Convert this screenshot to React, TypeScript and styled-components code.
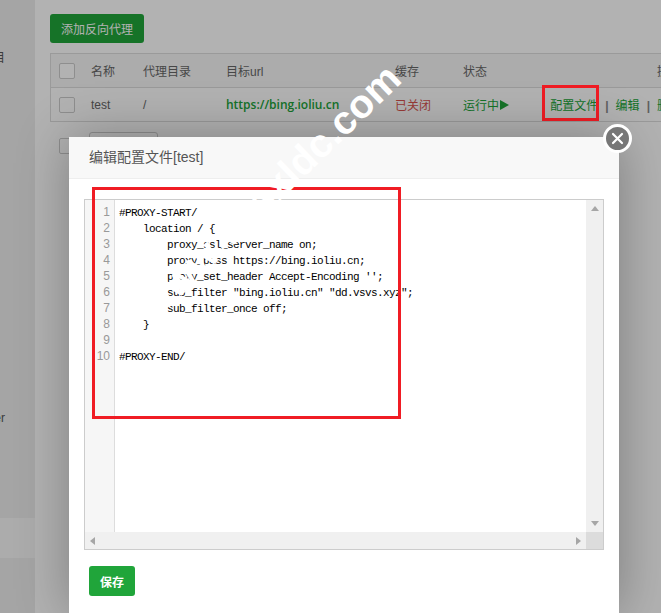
import React from "react";
import styled, { createGlobalStyle } from "styled-components";

const GlobalStyle = createGlobalStyle`
    html, body {
        margin: 0;
        height: 100%;
        overflow: hidden;
        background: #fff;
    }
    body {
        font-family: "Liberation Sans", "Noto Sans CJK SC", sans-serif;
        font-size: 12px;
        color: #666;
    }
`;

const Page = styled.div`
    display: flex;
    width: 661px;
    height: 613px;
    overflow: hidden;
`;

const Sidebar = styled.nav`
    flex: 0 0 35px;
    width: 35px;
    padding-top: 38px;
    background: #ececec;
    overflow: hidden;
`;

const SideItem = styled.div<{ $active?: boolean }>`
    width: 65px;
    height: 40px;
    margin-left: -60px;
    line-height: 40px;
    text-align: right;
    white-space: nowrap;
    color: #555;
    background: ${(p) => (p.$active ? "#f6f6f6" : "transparent")};
    box-shadow: ${(p) => (p.$active ? "40px 0 0 #f6f6f6" : "none")};
`;

const Main = styled.main`
    flex: 1;
    min-width: 0;
    padding: 14px 0 0 15px;
    background: #fff;
`;

const AddButton = styled.button`
    display: block;
    width: 94px;
    height: 29px;
    padding: 0;
    border: none;
    border-radius: 3px;
    background: #20a53a;
    color: #fff;
    font: inherit;
`;

const Table = styled.div`
    width: 680px;
    margin-top: 10px;
    border: 1px solid #ddd;
    box-sizing: border-box;
`;

const TableRow = styled.div<{ $head?: boolean }>`
    display: grid;
    grid-template-columns: 40px 52px 83px 169px 68px 87px 131px;
    align-items: center;
    height: 33px;
    background: ${(p) => (p.$head ? "#f6f6f6" : "#fff")};
    border-bottom: ${(p) => (p.$head ? "1px solid #ddd" : "none")};
    white-space: nowrap;
`;

const Check = styled.span`
    display: block;
    width: 14px;
    height: 14px;
    margin-left: 8px;
    border: 1px solid #ccc;
    border-radius: 2px;
    background: #fff;
`;

const UrlLink = styled.span`
    color: #20a53a;
    font-family: "Open Sans", "Liberation Sans", sans-serif;
    font-size: 12px;
    font-weight: 600;
`;

const Stopped = styled.span`
    color: #d9534f;
`;

const Running = styled.span`
    color: #20a53a;
`;

const PlayIcon = styled.span`
    display: inline-block;
    margin-left: 1px;
    border-style: solid;
    border-width: 5px 0 5px 9px;
    border-color: transparent transparent transparent #20a53a;
`;

const Actions = styled.div<{ $head?: boolean }>`
    text-align: right;
    color: ${(p) => (p.$head ? "#666" : "#20a53a")};
`;

const Sep = styled.span`
    margin: 0 7px;
    font-weight: 700;
    color: #888;
`;

const Pager = styled.div`
    display: flex;
    align-items: flex-start;
    gap: 14px;
    margin: 10px 0 0 9px;
`;

const PagerCheck = styled(Check)`
    margin: 6px 0 0;
`;

const PagerSelect = styled.div`
    width: 67px;
    height: 30px;
    border: 1px solid #ccc;
    border-radius: 3px;
    background: #fff;
`;

const Overlay = styled.div`
    position: absolute;
    inset: 0;
    background: rgba(0, 0, 0, 0.3);
`;

const Modal = styled.section`
    position: absolute;
    left: 69px;
    top: 137px;
    bottom: 0;
    width: 550px;
    background: #fff;
    box-shadow: 1px 1px 50px rgba(0, 0, 0, 0.3);
`;

const ModalTitle = styled.header`
    height: 41px;
    padding-left: 20px;
    line-height: 40px;
    font-size: 14px;
    color: #555;
    background: #f8f8f8;
    border-bottom: 1px solid #eee;
`;

const ModalBody = styled.div`
    padding: 20px 15px 0;
`;

const Editor = styled.div`
    display: grid;
    grid-template-columns: 1fr 17px;
    grid-template-rows: 1fr 17px;
    height: 351px;
    border: 1px solid #ccc;
    box-sizing: border-box;
`;

const EditorPane = styled.div`
    display: flex;
    min-width: 0;
    min-height: 0;
`;

const Gutter = styled.div`
    flex: 0 0 25px;
    width: 25px;
    padding: 4px 4px 0 0;
    background: #f6f6f6;
    border-right: 1px solid #ddd;
    text-align: right;
    font-size: 12px;
    line-height: 16px;
    color: #999;
`;

const Code = styled.pre`
    margin: 0;
    padding: 5px 0 0 4px;
    font-family: "Liberation Mono", "Noto Sans CJK SC", monospace;
    font-size: 11px;
    letter-spacing: -0.6px;
    line-height: 16px;
    color: #000;
`;

const Scrollbar = styled.div<{ $horizontal?: boolean }>`
    display: flex;
    flex-direction: ${(p) => (p.$horizontal ? "row" : "column")};
    align-items: center;
    justify-content: space-between;
    padding: ${(p) => (p.$horizontal ? "0 5px" : "6px 0")};
    background: #f0f0f0;
`;

const ScrollCorner = styled.div`
    background: #dcdcdc;
`;

const arrowBorders = {
    up: "0 4px 5px 4px",
    down: "5px 4px 0 4px",
    left: "4px 5px 4px 0",
    right: "4px 0 4px 5px",
};

const arrowColors = {
    up: "transparent transparent #a6a6a6 transparent",
    down: "#a6a6a6 transparent transparent transparent",
    left: "transparent #a6a6a6 transparent transparent",
    right: "transparent transparent transparent #a6a6a6",
};

const Arrow = styled.span<{ $dir: "up" | "down" | "left" | "right" }>`
    display: block;
    width: 0;
    height: 0;
    border-style: solid;
    border-width: ${(p) => arrowBorders[p.$dir]};
    border-color: ${(p) => arrowColors[p.$dir]};
`;

const SaveButton = styled.button`
    display: block;
    width: 46px;
    height: 30px;
    margin: 16px 0 0 5px;
    padding: 0;
    border: none;
    border-radius: 3px;
    background: #20a53a;
    color: #fff;
    font: inherit;
    font-weight: 700;
`;

const CloseButton = styled.button`
    position: absolute;
    left: 603px;
    top: 124px;
    display: flex;
    align-items: center;
    justify-content: center;
    width: 29px;
    height: 29px;
    padding: 0;
    border: 3px solid #fff;
    border-radius: 50%;
    background: #777;
    box-sizing: border-box;
`;

const Annotation = styled.div<{ $x: number; $y: number; $w: number; $h: number }>`
    position: absolute;
    left: ${(p) => p.$x}px;
    top: ${(p) => p.$y}px;
    width: ${(p) => p.$w}px;
    height: ${(p) => p.$h}px;
    border: 3px solid #f01c24;
    box-sizing: border-box;
`;

const Watermark = styled.div`
    position: absolute;
    left: -19px;
    top: 214px;
    width: 480px;
    transform: rotate(-44deg);
    font-size: 40px;
    font-weight: 700;
    line-height: 48px;
    text-align: right;
    white-space: nowrap;
    color: #fff;
`;

const sideItems = ["项目", "", "", "", "", "", "", "", "", "Docker", "", "", ""];

const codeText = `#PROXY-START/
    location / {
        proxy_ssl_server_name on;
        proxy_pass https://bing.ioliu.cn;
        proxy_set_header Accept-Encoding '';
        sub_filter "bing.ioliu.cn" "dd.vsvs.xyz";
        sub_filter_once off;
    }

#PROXY-END/`;

const App: React.FC = () => {
    return (
        <>
            <GlobalStyle />
            <Page>
                <Sidebar>
                    {sideItems.map((label, i) => (
                        <SideItem key={i} $active={i === 12}>
                            {label}
                        </SideItem>
                    ))}
                </Sidebar>
                <Main>
                    <AddButton>添加反向代理</AddButton>
                    <Table>
                        <TableRow $head>
                            <Check />
                            <span>名称</span>
                            <span>代理目录</span>
                            <span>目标url</span>
                            <span>缓存</span>
                            <span>状态</span>
                            <Actions $head>操作</Actions>
                        </TableRow>
                        <TableRow>
                            <Check />
                            <span>test</span>
                            <span>/</span>
                            <UrlLink>https://bing.ioliu.cn</UrlLink>
                            <Stopped>已关闭</Stopped>
                            <Running>
                                运行中
                                <PlayIcon />
                            </Running>
                            <Actions>
                                配置文件<Sep>|</Sep>编辑<Sep>|</Sep>删除
                            </Actions>
                        </TableRow>
                    </Table>
                    <Pager>
                        <PagerCheck />
                        <PagerSelect />
                    </Pager>
                </Main>
            </Page>
            <Overlay />
            <Annotation $x={542} $y={85} $w={57} $h={36} />
            <Modal>
                <ModalTitle>编辑配置文件[test]</ModalTitle>
                <ModalBody>
                    <Editor>
                        <EditorPane>
                            <Gutter>
                                {Array.from({ length: 10 }, (_, i) => (
                                    <div key={i}>{i + 1}</div>
                                ))}
                            </Gutter>
                            <Code>{codeText}</Code>
                        </EditorPane>
                        <Scrollbar>
                            <Arrow $dir="up" />
                            <Arrow $dir="down" />
                        </Scrollbar>
                        <Scrollbar $horizontal>
                            <Arrow $dir="left" />
                            <Arrow $dir="right" />
                        </Scrollbar>
                        <ScrollCorner />
                    </Editor>
                    <SaveButton>保存</SaveButton>
                </ModalBody>
            </Modal>
            <CloseButton aria-label="关闭">
                <svg width="15" height="15" viewBox="0 0 15 15">
                    <path d="M3 3 L12 12 M12 3 L3 12" stroke="#fff" strokeWidth="2.2" strokeLinecap="round" />
                </svg>
            </CloseButton>
            <Annotation $x={92} $y={187} $w={309} $h={232} />
            <Watermark>www.vpsxldc.com</Watermark>
        </>
    );
};

export default App;
